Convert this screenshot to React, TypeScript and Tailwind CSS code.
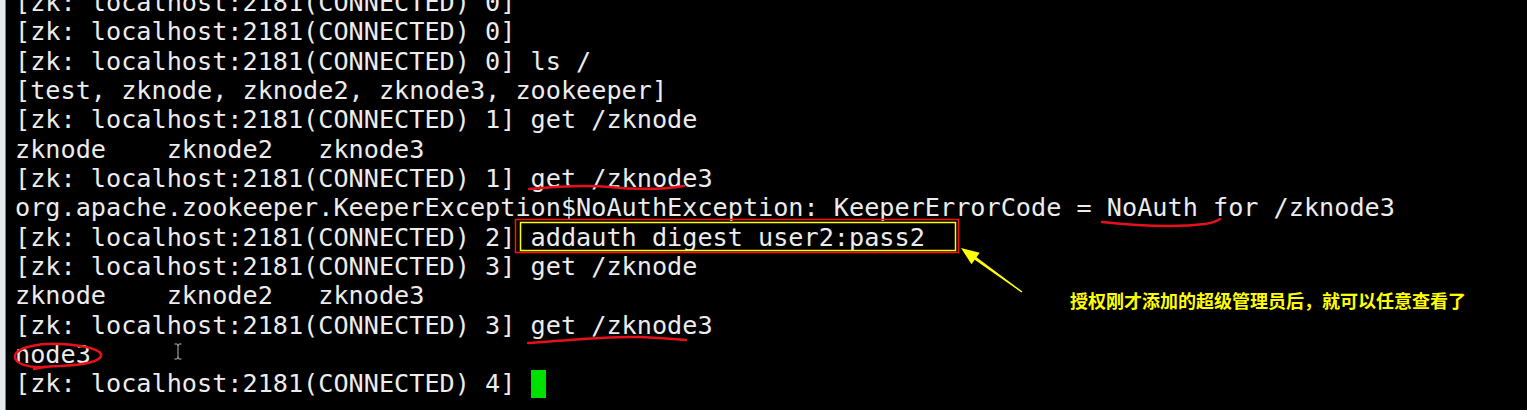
import React from 'react';

const mono = { fontFamily: '"DejaVu Sans Mono", "Liberation Mono", monospace' };

const lines: string[] = [
  '[zk: localhost:2181(CONNECTED) 0]',
  '[zk: localhost:2181(CONNECTED) 0]',
  '[zk: localhost:2181(CONNECTED) 0] ls /',
  '[test, zknode, zknode2, zknode3, zookeeper]',
  '[zk: localhost:2181(CONNECTED) 1] get /zknode',
  'zknode    zknode2   zknode3',
  '[zk: localhost:2181(CONNECTED) 1] get /zknode3',
  'org.apache.zookeeper.KeeperException$NoAuthException: KeeperErrorCode = NoAuth for /zknode3',
  '[zk: localhost:2181(CONNECTED) 2] addauth digest user2:pass2',
  '[zk: localhost:2181(CONNECTED) 3] get /zknode',
  'zknode    zknode2   zknode3',
  '[zk: localhost:2181(CONNECTED) 3] get /zknode3',
  'node3',
];

const Marks = () => (
  <svg
    className="absolute inset-0 pointer-events-none"
    width="1527"
    height="410"
    viewBox="0 0 1527 410"
    fill="none"
  >
    {/* hand drawn red underlines */}
    <g stroke="#e8101a" strokeWidth="2.5" strokeLinecap="round" strokeLinejoin="round">
      <path d="M529 189 C560 186 590 185 610 187 C640 190 665 189 684 186" />
      <path d="M1102 222 C1140 226 1180 227 1205 224 C1212 223 1217 221 1220 219" />
      <path d="M528 343 C570 340 610 336 640 337 C660 338 675 339 686 340" />
      <path d="M44 367 C30 368 14 364 15 356 C16 347 40 343 60 344 C85 345 103 350 101 356 C99 362 80 365 60 366 C50 366 42 367 34 369" />
    </g>
    {/* boxes around addauth */}
    <rect x="515.5" y="219.5" width="443" height="33" stroke="#ff1010" strokeWidth="1.5" />
    <rect x="520.5" y="222.5" width="435" height="28" stroke="#ffff00" strokeWidth="1.5" />
    {/* arrow */}
    <polygon
      fill="#ffff00"
      points="961,248 979.7,252.8 976.5,257.3 1022.5,291.5 1021.5,292.5 974.7,259.7 971.5,264.2"
    />
    {/* mouse I-beam */}
    <path
      d="M174.5 344 H177 Q178 344 178 346 V357 Q178 359 177 359 H174.5 M181.5 344 H179 Q178 344 178 346 M178 357 Q178 359 179 359 H181.5"
      stroke="#b8b8b8"
      strokeWidth="1"
    />
  </svg>
);

export default function App() {
  return (
    <div className="relative w-full h-[410px] overflow-hidden bg-black flex">
      <div className="w-[5px] bg-[#e6eaee] shrink-0" />
      <div className="w-px bg-[#5b87b8] shrink-0" />
      <div
        className="pl-[9px] -mt-[12px] text-[25.2px] leading-[29.33px] text-[#ececec] whitespace-pre"
        style={mono}
      >
        {lines.map((l, i) => (
          <div key={i}>{l}</div>
        ))}
        <div>
          {'[zk: localhost:2181(CONNECTED) 4] '}
          <span className="inline-block align-top mt-[1px] w-[15px] h-[28px] bg-[#00e000]" />
        </div>
      </div>
      <Marks />
      <div
        className="absolute left-[1070px] top-[290px] text-[18px] leading-[20px] font-bold text-[#ffff00] whitespace-nowrap"
        style={{ fontFamily: '"Noto Sans CJK SC", sans-serif' }}
      >
        授权刚才添加的超级管理员后，就可以任意查看了
      </div>
    </div>
  );
}
